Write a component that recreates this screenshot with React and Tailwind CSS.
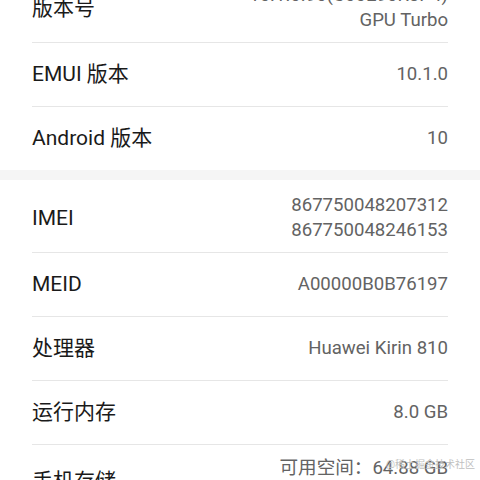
import React from "react";

const font = { fontFamily: 'Roboto, "Noto Sans CJK SC", sans-serif' };

function Row({ label, values, last, pad }) {
  return (
    <div className="flex flex-col">
      <div className={`flex items-center justify-between px-[32px] ${pad || "h-[63px]"}`}>
        <div className="text-[21px] leading-[25px] text-[#1a1a1a]">{label}</div>
        <div className="flex flex-col items-end text-[18.6px] leading-[25px] text-[#636363]">
          {values.map((v, i) => (
            <div key={i} className="whitespace-nowrap">
              {v}
            </div>
          ))}
        </div>
      </div>
      {!last && <div className="mx-[32px] h-px bg-[#e6e6e6]" />}
    </div>
  );
}

export default function App() {
  return (
    <div className="relative h-[480px] w-[480px] overflow-hidden bg-white" style={font}>
      <div className="-mt-[30px] flex flex-col">
        <Row
          label="版本号"
          values={["10.1.0.90(C00E90R3P4)", "GPU Turbo"]}
          pad="min-h-[72px] pt-[13px] pb-[9px]"
        />
        <Row label="EMUI 版本" values={["10.1.0"]} />
        <Row label="Android 版本" values={["10"]} last />
        <div className="h-[10px] bg-[#f5f5f5]" />
        <Row
          label="IMEI"
          values={["867750048207312", "867750048246153"]}
          pad="min-h-[72px] pt-[13px] pb-[9px]"
        />
        <Row label="MEID" values={["A00000B0B76197"]} />
        <Row label="处理器" values={["Huawei Kirin 810"]} />
        <Row label="运行内存" values={["8.0 GB"]} />
        <Row
          label="手机存储"
          values={["可用空间：64.88 GB", "总容量：128 GB"]}
          pad="min-h-[72px] py-[11px]"
          last
        />
      </div>
      <div className="absolute right-[5px] top-[459px] text-[10px] leading-[12px] text-[#c0c0c0]">
        @稀土掘金技术社区
      </div>
    </div>
  );
}
